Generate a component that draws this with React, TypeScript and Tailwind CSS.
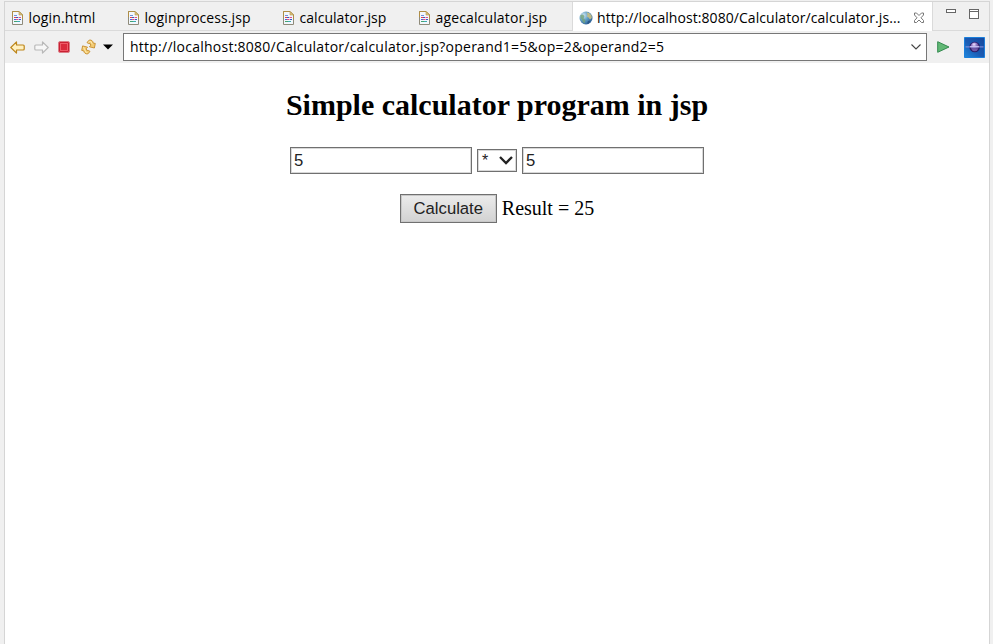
import React from 'react';

const ui = "font-['Open_Sans','Noto_Sans',sans-serif] whitespace-nowrap text-black";

function PageIcon() {
  return (
    <svg className="block shrink-0" width="11" height="14" viewBox="0 0 11 14">
      <path d="M.5 .5H7L10.5 4V13.5H.5Z" fill="#f2f7fc" stroke="#8f8b7a" />
      <path d="M.5 6V.5H7L10.5 4V8" fill="none" stroke="#b08e45" />
      <path d="M7 .5V4H10.5Z" fill="#ddc27e" stroke="#b49348" strokeWidth=".6" />
      <g fill="none" strokeWidth="1">
        <path d="M2 4.5H5" stroke="#7390d8" />
        <path d="M2 6.5H4" stroke="#e83d4e" />
        <path d="M4 6.5H6M7 8.5H9" stroke="#3d59bd" />
        <path d="M6.5 6.5H9M4 8.5H6.5" stroke="#e0508c" />
        <path d="M2 8.5H4" stroke="#4869cf" />
        <path d="M2 10.5H5" stroke="#43a36f" />
        <path d="M5 10.5H8" stroke="#3daab0" />
      </g>
    </svg>
  );
}

function Globe() {
  return (
    <svg className="block shrink-0" width="14" height="14" viewBox="0 0 14 14">
      <defs>
        <radialGradient id="sea" cx=".3" cy=".3" r=".8">
          <stop stopColor="#d3e9f5" />
          <stop offset=".5" stopColor="#5e9cc4" />
          <stop offset="1" stopColor="#2a5c93" />
        </radialGradient>
      </defs>
      <circle cx="7" cy="7" r="6.5" fill="url(#sea)" />
      <path d="M7.5 1.2Q11 1.5 12.6 4.5L12.8 7L11 8.5L9.5 6.5L8 5.5L8.5 3.5Z" fill="#c9bf83" opacity=".9" />
      <path d="M1.5 4L4 3.5L5.5 5L4.5 7.5L6.5 9L5.5 12.5Q3.5 11 3 8.5L1.5 7Z" fill="#74a278" opacity=".8" />
      <path d="M9 10L11.5 9.5L10 12.3L8 12.8Z" fill="#2a5788" />
    </svg>
  );
}

function Arrow({ color, fill, flip }: { color: string; fill: string; flip?: boolean }) {
  return (
    <svg className={flip ? 'block shrink-0 -scale-x-100' : 'block shrink-0'} width="15" height="13" viewBox="0 0 15 13">
      <path d="M.8 6.5L6.5 .9V4H13.2Q14.2 4 14.2 5V8Q14.2 9 13.2 9H6.5V12.1Z" fill={fill} stroke={color} strokeWidth="1.2" strokeLinejoin="round" />
    </svg>
  );
}

function Refresh() {
  return (
    <svg className="block" width="15" height="16" viewBox="0 0 15 16">
      <g fill="#f3cb72" stroke="#c58c2c" strokeWidth=".9" strokeLinejoin="round">
        <path d="M6 3.6L8 1.2Q11.6 .4 12.3 4.2L14.3 4.4L13.4 9L8.4 7.8L9.8 6.2Q9.6 3.8 7.8 4.6Z" />
        <path d="M9 12.4L7 14.8Q3.4 15.4 2.7 11.8L.7 11.4L1.6 6.9L6.6 8.2L5.2 9.8Q5.4 12.2 7.2 11.4Z" />
      </g>
      <path d="M7.4 3.3L8.6 2.3Q10.6 2 11.2 5.2M2.5 8.2L3.9 11Q4.4 13.7 6.4 13.7" fill="none" stroke="#fff0bd" strokeWidth=".8" />
    </svg>
  );
}

function EclipseIcon() {
  return (
    <svg className="block shrink-0" width="21" height="21" viewBox="0 0 21 21">
      <defs>
        <linearGradient id="sky" x1="0" y1="1" x2="1" y2="0">
          <stop stopColor="#2088de" />
          <stop offset=".45" stopColor="#1b5cb4" />
          <stop offset="1" stopColor="#15479c" />
        </linearGradient>
        <radialGradient id="orb" cx=".42" cy=".25" r=".75">
          <stop stopColor="#efe4ff" />
          <stop offset=".4" stopColor="#9079c6" />
          <stop offset="1" stopColor="#2b1c66" />
        </radialGradient>
      </defs>
      <path d="M.5 .5H20.5V20.5H.5Z" fill="url(#sky)" stroke="#1b7fdb" />
      <circle cx="10.7" cy="10" r="5.3" fill="#2b1c66" />
      <circle cx="10.7" cy="9.6" r="4.2" fill="url(#orb)" />
      <path d="M7 11.5H14.4Q13.4 14.2 10.7 14.2Q8 14.2 7 11.5Z" fill="#7058a8" />
      <path d="M1.5 9.9H19.5" stroke="#8e93e0" strokeWidth="1" />
      <path d="M6 9.7H15" stroke="#e4dbff" strokeWidth=".8" />
    </svg>
  );
}

function Tab({ label, size, gap }: { label: string; size: string; gap: string }) {
  return (
    <div className={`flex h-full shrink-0 items-center pt-[3px] ${size}`}>
      <PageIcon />
      <span className={`ml-[5.5px] text-[14px] leading-[20px] ${gap}`}>{label}</span>
    </div>
  );
}

export default function App() {
  return (
    <div className="flex h-[644px] w-[993px] overflow-hidden bg-[#f0f0f0] pt-px pr-[3px] pl-[4px]">
      <div className="flex w-[986px] flex-col border-x border-t border-[#d5d5d5] bg-white">
        <div className={`flex h-[29px] shrink-0 bg-[#f0f0f0] ${ui}`}>
          <div className="flex h-full w-[568px] shrink-0 border-r border-b border-[#dadada] pl-[7px]">
            <Tab label="login.html" size="w-[116px]" gap="tracking-[0.15px]" />
            <Tab label="loginprocess.jsp" size="w-[155px]" gap="tracking-[0.08px]" />
            <Tab label="calculator.jsp" size="w-[136px]" gap="tracking-[0.04px]" />
            <Tab label="agecalculator.jsp" size="w-[140px]" gap="tracking-[0.14px]" />
          </div>
          <div className="flex h-full w-[359px] shrink-0 items-center bg-white pt-[3px] pl-[6px]">
            <Globe />
            <span className="ml-[4px] w-[316px] text-[14px] leading-[20px] tracking-[0.065px]">http://localhost:8080/Calculator/calculator.js...</span>
            <svg width="12" height="12" viewBox="0 0 12 12" fill="none" stroke="#777">
              <path d="M1.5 1H3.5L6 3.5L8.5 1H10.5V3L8 5.8L10.5 8.5V10.5H8.5L6 8L3.5 10.5H1.5V8.5L4 5.8L1.5 3Z" />
            </svg>
          </div>
          <div className="flex h-full grow items-start border-b border-l border-[#dadada] pt-[7px] pl-[13px]">
            <span className="block h-[4px] w-[10px] border border-[#666] bg-white" />
            <span className="ml-[13px] block h-[10px] w-[10px] border border-[#666] bg-white"><span className="mt-px block h-px bg-[#666]" /></span>
          </div>
        </div>
        <div className={`flex h-[32px] shrink-0 items-center bg-[#f0f0f0] pl-[5px] ${ui}`}>
          <Arrow color="#bd861b" fill="#fff0c0" />
          <span className="ml-[9px]"><Arrow color="#b8b8b8" fill="#f7f7f7" flip /></span>
          <span className="ml-[9px] block h-[12px] w-[12px] rounded-[2px] border border-[#dc7f88] bg-[#d92a3c] shadow-[inset_0_0_0_1px_#c92033,inset_0_0_0_2px_#ee5c69]" />
          <span className="ml-[11px]"><Refresh /></span>
          <svg className="ml-[7px] block" width="10" height="6" viewBox="0 0 10 6"><path d="M0 .5H10L5 5.5Z" fill="#000" /></svg>
          <div className="ml-[10px] flex h-[28px] w-[804px] items-center justify-between border border-[#777] bg-white pr-[5px] pl-[6px]">
            <span className="text-[14px] leading-[20px] tracking-[0.245px]">http://localhost:8080/Calculator/calculator.jsp?operand1=5&amp;op=2&amp;operand2=5</span>
            <svg width="10" height="6" viewBox="0 0 10 6"><path d="M.5 .5L5 5L9.5 .5" fill="none" stroke="#444" strokeWidth="1.1" /></svg>
          </div>
          <svg className="ml-[10px] block" width="13" height="12" viewBox="0 0 13 12"><path d="M.7 .7L12 6L.7 11.3Z" fill="#62b875" stroke="#348b50" strokeLinejoin="round" /></svg>
          <span className="ml-[14px]"><EclipseIcon /></span>
        </div>
        <main className="flex grow flex-col items-center bg-white font-['Liberation_Serif',serif] text-black">
          <h2 className="mt-[25px] text-[30px] leading-[34px] font-bold whitespace-nowrap">Simple calculator program in jsp</h2>
          <div className="mt-[25px] flex h-[27px] items-center gap-[5px] font-['Liberation_Sans',sans-serif] text-[#222]">
            <div className="flex h-[27px] w-[182px] items-center border border-[#707070] pl-[3px] text-[16.67px] shadow-[inset_0_0_0_1px_#d8d8d8]">5</div>
            <div className="flex h-[23px] w-[40px] items-center justify-between border border-[#707070] pr-[3px] pl-[4px] text-[16px] shadow-[inset_0_0_0_1px_#d8d8d8]">
              <span>*</span>
              <svg width="14" height="9" viewBox="0 0 14 9"><path d="M1 1L7 7L13 1" fill="none" stroke="#222" strokeWidth="2.3" /></svg>
            </div>
            <div className="flex h-[27px] w-[182px] items-center border border-[#707070] pl-[3px] text-[16.67px] shadow-[inset_0_0_0_1px_#d8d8d8]">5</div>
          </div>
          <div className="mt-[20px] flex h-[29px] items-center gap-[5px]">
            <button className="h-[29px] w-[97px] border border-[#707070] bg-linear-to-b from-[#ececec] to-[#d2d2d2] font-['Liberation_Sans',sans-serif] text-[16.67px] text-[#222] shadow-[inset_0_0_0_1px_#c8c8c8]">Calculate</button>
            <span className="mb-[2px] text-[20px] leading-[24px] whitespace-nowrap">Result = 25</span>
          </div>
        </main>
      </div>
    </div>
  );
}
